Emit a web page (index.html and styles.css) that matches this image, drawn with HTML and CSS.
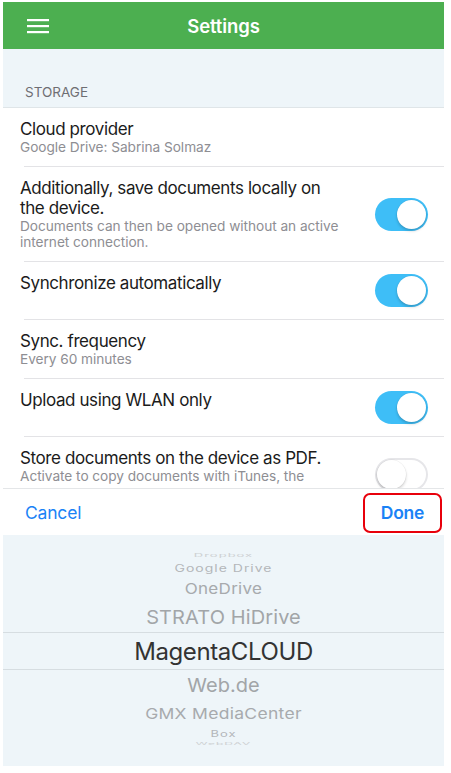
FILE: index.html
```html
<!DOCTYPE html>
<html lang="en">
<head>
<meta charset="utf-8">
<title>Settings</title>
<link rel="stylesheet" href="styles.css">
</head>
<body>
<div class="screen">
  <header class="navbar">
    <svg class="menu" width="22" height="16" viewBox="0 0 22 16" aria-hidden="true">
      <rect x="0" y="1" width="22" height="2.2" fill="#fff"/>
      <rect x="0" y="7" width="22" height="2.2" fill="#fff"/>
      <rect x="0" y="13" width="22" height="2.2" fill="#fff"/>
    </svg>
    <h1 class="title">Settings</h1>
  </header>

  <div class="list">
    <div class="section-head">STORAGE</div>

    <div class="row">
      <div class="text">
        <div class="label">Cloud provider</div>
        <div class="sub">Google Drive: Sabrina Solmaz</div>
      </div>
    </div>
    <div class="sep"></div>

    <div class="row">
      <div class="text">
        <div class="label">Additionally, save documents locally on<br>the device.</div>
        <div class="sub">Documents can then be opened without an active<br>internet connection.</div>
      </div>
      <span class="toggle on"><span class="knob"></span></span>
    </div>
    <div class="sep"></div>

    <div class="row">
      <div class="text">
        <div class="label">Synchronize automatically</div>
      </div>
      <span class="toggle on"><span class="knob"></span></span>
    </div>
    <div class="sep"></div>

    <div class="row">
      <div class="text">
        <div class="label">Sync. frequency</div>
        <div class="sub">Every 60 minutes</div>
      </div>
    </div>
    <div class="sep"></div>

    <div class="row">
      <div class="text">
        <div class="label">Upload using WLAN only</div>
      </div>
      <span class="toggle on"><span class="knob"></span></span>
    </div>
    <div class="sep"></div>

    <div class="row">
      <div class="text">
        <div class="label">Store documents on the device as PDF.</div>
        <div class="sub">Activate to copy documents with iTunes, the</div>
      </div>
      <span class="toggle off"><span class="knob"></span></span>
    </div>
  </div>

  <div class="toolbar">
    <button class="btn cancel">Cancel</button>
    <button class="btn done">Done</button>
  </div>

  <div class="picker">
    <div class="opt o-4"><span>Dropbox</span></div>
    <div class="opt o-3"><span>Google Drive</span></div>
    <div class="opt o-2"><span>OneDrive</span></div>
    <div class="opt o-1"><span>STRATO HiDrive</span></div>
    <div class="opt o0"><span>MagentaCLOUD</span></div>
    <div class="opt o1"><span>Web.de</span></div>
    <div class="opt o2"><span>GMX MediaCenter</span></div>
    <div class="opt o3"><span>Box</span></div>
    <div class="opt o4"><span>WebDAV</span></div>
  </div>
</div>
</body>
</html>
```

FILE: styles.css
```css
* { box-sizing: border-box; }

html, body {
  margin: 0;
  padding: 0;
  background: #ffffff;
}

body {
  font-family: Inter, "Noto Sans", "Liberation Sans", sans-serif;
  color: #1b1b1b;
}

.screen {
  margin: 2px 0 0 3px;
  width: 441px;
  height: 764px;
  display: flex;
  flex-direction: column;
  overflow: hidden;
  background: #eef5f9;
}

/* ---------- nav bar ---------- */
.navbar {
  flex: 0 0 47px;
  background: #4caf50;
  display: flex;
  align-items: center;
  justify-content: center;
  position: relative;
}

.menu {
  position: absolute;
  left: 24px;
  top: 16px;
}

.title {
  margin: 0;
  color: #ffffff;
  font-size: 18.5px;
  font-weight: 600;
  letter-spacing: -0.1px;
}

/* ---------- list ---------- */
.list {
  flex: 0 0 439px;
  overflow: hidden;
  background: #ffffff;
}

.section-head {
  height: 59px;
  background: #eef5f9;
  border-bottom: 1px solid #dfe5e8;
  padding: 35px 0 0 22px;
  font-size: 13.5px;
  color: #6e6e73;
  line-height: 16px;
}

.row {
  display: flex;
  align-items: center;
  min-height: 57px;
  padding: 0 16px 0 17px;
  background: #ffffff;
}

.text {
  flex: 1;
  align-self: flex-start;
  padding: 11px 0;
}

.label {
  font-size: 17px;
  line-height: 20px;
  letter-spacing: -0.4px;
  color: #1b1b1b;
}

.sub {
  font-size: 13.7px;
  line-height: 16px;
  letter-spacing: -0.05px;
  color: #8e8e93;
}

.sep {
  height: 1px;
  margin-left: 21px;
  background: #e3e3e6;
}

/* ---------- toggles ---------- */
.toggle {
  flex: 0 0 53px;
  height: 33px;
  border-radius: 17px;
  display: flex;
  align-items: center;
  padding: 2px;
}

.toggle.on {
  background: #3ebef7;
  justify-content: flex-end;
}

.toggle.off {
  background: #ffffff;
  box-shadow: inset 0 0 0 2px #e6e6e9;
  justify-content: flex-start;
  margin-top: 16px;
}

.knob {
  width: 29px;
  height: 29px;
  border-radius: 50%;
  background: #ffffff;
  box-shadow: 0 2px 3px rgba(0, 0, 0, 0.18), 0 0 0 0.5px rgba(0, 0, 0, 0.06);
}

/* ---------- toolbar ---------- */
.toolbar {
  flex: 0 0 47px;
  background: #ffffff;
  border-top: 1px solid #e4e6e8;
  display: flex;
  align-items: center;
  justify-content: space-between;
  padding: 0 2px 0 22px;
}

.btn {
  background: none;
  border: none;
  padding: 0;
  font-family: inherit;
  font-size: 17.5px;
  color: #1a82f6;
  letter-spacing: -0.2px;
}

.btn.done {
  width: 79px;
  height: 40px;
  font-weight: 600;
  border: 2.5px solid #e8000b;
  border-radius: 7px;
  margin-top: 1px;
}

/* ---------- picker ---------- */
.picker {
  flex: 1;
  background: #eef5f9;
  padding-top: 16px;
  display: flex;
  flex-direction: column;
}

.opt {
  display: flex;
  align-items: center;
  justify-content: center;
  color: #a9acaf;
  white-space: nowrap;
}

.opt span { display: inline-block; }

.o-4 { height: 8px; }
.o-4 span { font-size: 13px; transform: scaleY(0.35); color: #cdd0d2; letter-spacing: 1px; }

.o-3 { height: 18px; }
.o-3 span { font-size: 14px; transform: scaleY(0.7); color: #b4b7ba; letter-spacing: 1px; }

.o-2 { height: 24px; }
.o-2 span { font-size: 17px; transform: scaleY(0.88); color: #a7aaad; letter-spacing: 0.3px; }

.o-1 { height: 31px; }
.o-1 span { font-size: 20px; transform: scaleY(0.96); color: #a2a5a8; letter-spacing: 0.1px; }

.o0 {
  height: 38px;
  border-top: 1px solid #d6dde1;
  border-bottom: 1px solid #d6dde1;
}
.o0 span { font-size: 24px; color: #333333; letter-spacing: -0.4px; }

.o1 { height: 30px; }
.o1 span { font-size: 20px; transform: scaleY(0.96); color: #a2a5a8; }

.o2 { height: 26px; }
.o2 span { font-size: 17.5px; transform: scaleY(0.86); color: #a7aaad; letter-spacing: 0.3px; }

.o3 { height: 14px; }
.o3 span { font-size: 13px; transform: scaleY(0.7); color: #b3b6b9; letter-spacing: 1px; }

.o4 { height: 6px; }
.o4 span { font-size: 12px; transform: scaleY(0.3); color: #cdd0d2; letter-spacing: 1px; }
```
